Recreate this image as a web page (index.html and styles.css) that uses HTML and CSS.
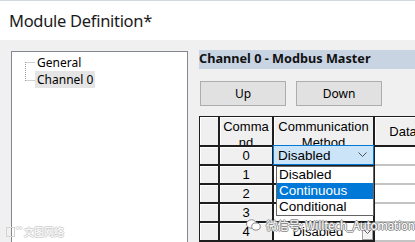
FILE: index.html
```html
<!DOCTYPE html>
<html lang="en">
<head>
    <meta charset="UTF-8">
    <meta name="viewport" content="width=device-width, initial-scale=1.0">
    <title>Module Definition</title>
    <link rel="stylesheet" href="styles.css">
</head>
<body>
<div class="window">
    <header class="titlebar">
        <h1>Module Definition*</h1>
    </header>

    <div class="main">
        <div class="tree">
            <div class="tree-body">
                <svg class="tree-lines" width="11" height="36" viewBox="0 0 11 36">
                    <path d="M1.5 8V27M1.5 8.5H11M1.5 26.5H11" stroke="#a0a0a0" stroke-dasharray="1 1" fill="none"/>
                </svg>
                <ul class="tree-items">
                    <li>General</li>
                    <li class="selected">Channel 0</li>
                </ul>
            </div>
        </div>

        <div class="panel">
            <div class="panel-head">Channel 0 - Modbus Master</div>
            <div class="buttons">
                <button class="btn">Up</button>
                <button class="btn">Down</button>
            </div>

            <div class="grid">
                <div class="cell gray"></div>
                <div class="cell gray head-wrap">Command</div>
                <div class="cell gray head-wrap">Communication Method</div>
                <div class="cell gray head-mid">Data</div>

                <div class="cell gray"></div>
                <div class="cell gray num">0</div>
                <div class="cell white"></div>
                <div class="cell white data"></div>

                <div class="cell gray"></div>
                <div class="cell gray num">1</div>
                <div class="cell white"></div>
                <div class="cell white data"></div>

                <div class="cell gray"></div>
                <div class="cell gray num">2</div>
                <div class="cell white"></div>
                <div class="cell white data"></div>

                <div class="cell gray"></div>
                <div class="cell gray num">3</div>
                <div class="cell white"></div>
                <div class="cell white data"></div>

                <div class="cell gray"></div>
                <div class="cell gray num">4</div>
                <div class="cell white choice">
                    <span class="choice-text">Disabled</span>
                    <span class="choice-btn">
                        <svg width="9" height="6" viewBox="0 0 9 6"><path d="M0.5 0.5L4.5 4.5L8.5 0.5" stroke="#606060" fill="none"/></svg>
                    </span>
                </div>
                <div class="cell white data"></div>

                <!-- open editor on row 0 -->
                <div class="combo">
                    <span>Disabled</span>
                    <svg width="9" height="6" viewBox="0 0 9 6"><path d="M0.5 0.5L4.5 4.5L8.5 0.5" stroke="#505050" fill="none"/></svg>
                </div>
                <ul class="combo-list">
                    <li>Disabled</li>
                    <li class="active">Continuous</li>
                    <li>Conditional</li>
                </ul>
            </div>
        </div>
    </div>

    <div class="watermark wm-left">
        <span class="wm-box"></span><span class="wm-dots">°°</span>文图网络
    </div>
    <div class="watermark wm-wechat">
        <svg width="15" height="12" viewBox="0 0 15 12">
            <ellipse cx="5.5" cy="5" rx="5" ry="4.2" fill="#fff" stroke="#8a8a8a"/>
            <ellipse cx="10" cy="7.5" rx="4.3" ry="3.6" fill="#fff" stroke="#8a8a8a"/>
        </svg>
        <span>微信号: Willtech_Automation</span>
    </div>
</div>
</body>
</html>
```

FILE: styles.css
```css
*{
    margin: 0;
    padding: 0;
    box-sizing: border-box;
}
body{
    background: #f0f0f0;
    overflow: hidden;
}
.window{
    position: relative;
    width: 415px;
    height: 242px;
    overflow: hidden;
    font-family: "Noto Sans", sans-serif;
    color: #000;
}
.titlebar{
    height: 40px;
    background: #fff;
    border-top: 1px solid #d2d9e3;
    padding: 9px 9px 0;
}
.titlebar h1{
    font-size: 16.5px;
    font-weight: normal;
    line-height: 22px;
    letter-spacing: -0.3px;
    color: #1a1a1a;
}
.main{
    display: flex;
    gap: 11px;
    padding: 11px 0 0 11px;
}

/* tree */
.tree{
    width: 177px;
    height: 220px;
    background: #fff;
    border: 1px solid #828790;
    flex-shrink: 0;
}
.tree-body{
    display: flex;
    padding: 2px 0 0 12px;
}
.tree-lines{
    flex-shrink: 0;
}
.tree-items{
    list-style: none;
    font-size: 12px;
    line-height: 17px;
}
.tree-items li{
    padding: 0 2px;
}
.tree-items .selected{
    background: #e5e5e5;
}

/* right side */
.panel{
    flex: 1;
    margin-top: -1px;
}
.panel-head{
    height: 19px;
    background: #c9d4e3;
    font-size: 12.7px;
    font-weight: bold;
    line-height: 17px;
    color: #111;
    white-space: nowrap;
}
.buttons{
    display: flex;
    gap: 10px;
    margin-top: 12px;
    padding-left: 1px;
}
.btn{
    width: 86px;
    height: 25px;
    background: #e1e1e1;
    border: 1px solid #adadad;
    font-family: "Noto Sans", sans-serif;
    font-size: 12px;
    color: #000;
}

/* data grid */
.grid{
    position: relative;
    display: grid;
    grid-template-columns: 20px 54px 101px 58px;
    grid-template-rows: 30px repeat(5, 19px);
    margin-top: 10px;
    border-top: 1px solid #1e1e1e;
    border-left: 1px solid #1e1e1e;
    font-family: "Liberation Sans", Arial, sans-serif;
    font-size: 13px;
    width: 234px;
}
.cell{
    border-right: 2px solid #1e1e1e;
    border-bottom: 2px solid #1e1e1e;
    overflow: hidden;
}
.gray{
    background: #f0f0f0;
    box-shadow: inset 1px 1px 0 #fff;
}
.white{
    background: #fff;
}
.data{
    border-bottom-color: #c4c4c4;
    border-right-color: #c4c4c4;
}
.head-wrap{
    text-align: center;
    line-height: 16px;
    padding: 2px 1px 0;
    word-break: break-all;
}
.head-mid, .num{
    display: flex;
    align-items: center;
    justify-content: center;
}
.choice{
    display: flex;
    align-items: flex-start;
}
.choice-text{
    flex: 1;
    text-align: center;
    line-height: 17px;
}
.choice-btn{
    display: flex;
    align-items: center;
    justify-content: center;
    width: 11px;
    height: 16px;
    margin-top: 1px;
    background: #f4f4f4;
    border: 1px solid #a0a0a0;
}

.combo{
    position: absolute;
    left: 73px;
    top: 28px;
    width: 101px;
    height: 20px;
    display: flex;
    align-items: center;
    justify-content: space-between;
    padding: 0 6px 0 4px;
    background: #cce4f7;
    border: 1px solid #0078d7;
    font-size: 13.5px;
}
.combo-list{
    position: absolute;
    left: 76px;
    top: 49px;
    width: 98px;
    list-style: none;
    background: #fff;
    border: 1px solid #646464;
    font-size: 13.5px;
}
.combo-list li{
    height: 16px;
    line-height: 16px;
    padding-left: 2px;
}
.combo-list .active{
    background: #0078d7;
    color: #fff;
}

/* watermarks */
.watermark{
    position: absolute;
    display: flex;
    align-items: center;
    font-family: "Noto Sans CJK SC", sans-serif;
    color: #fff;
    white-space: nowrap;
}
.wm-wechat{
    left: 246px;
    top: 217px;
    gap: 5px;
    font-size: 11.5px;
    letter-spacing: -0.2px;
    text-shadow: 1px 0 0 #8c8c8c, -1px 0 0 #8c8c8c, 0 1px 0 #8c8c8c, 0 -1px 0 #8c8c8c;
}
.wm-left{
    left: 6px;
    top: 224px;
    font-size: 10px;
    text-shadow: 1px 0 0 #d0d0d0, -1px 0 0 #d0d0d0, 0 1px 0 #d0d0d0, 0 -1px 0 #d0d0d0;
}
.wm-box{
    width: 9px;
    height: 10px;
    border: 1px solid #d4d4d4;
}
.wm-dots{
    font-size: 8px;
    margin: -4px 2px 0 1px;
}
```
